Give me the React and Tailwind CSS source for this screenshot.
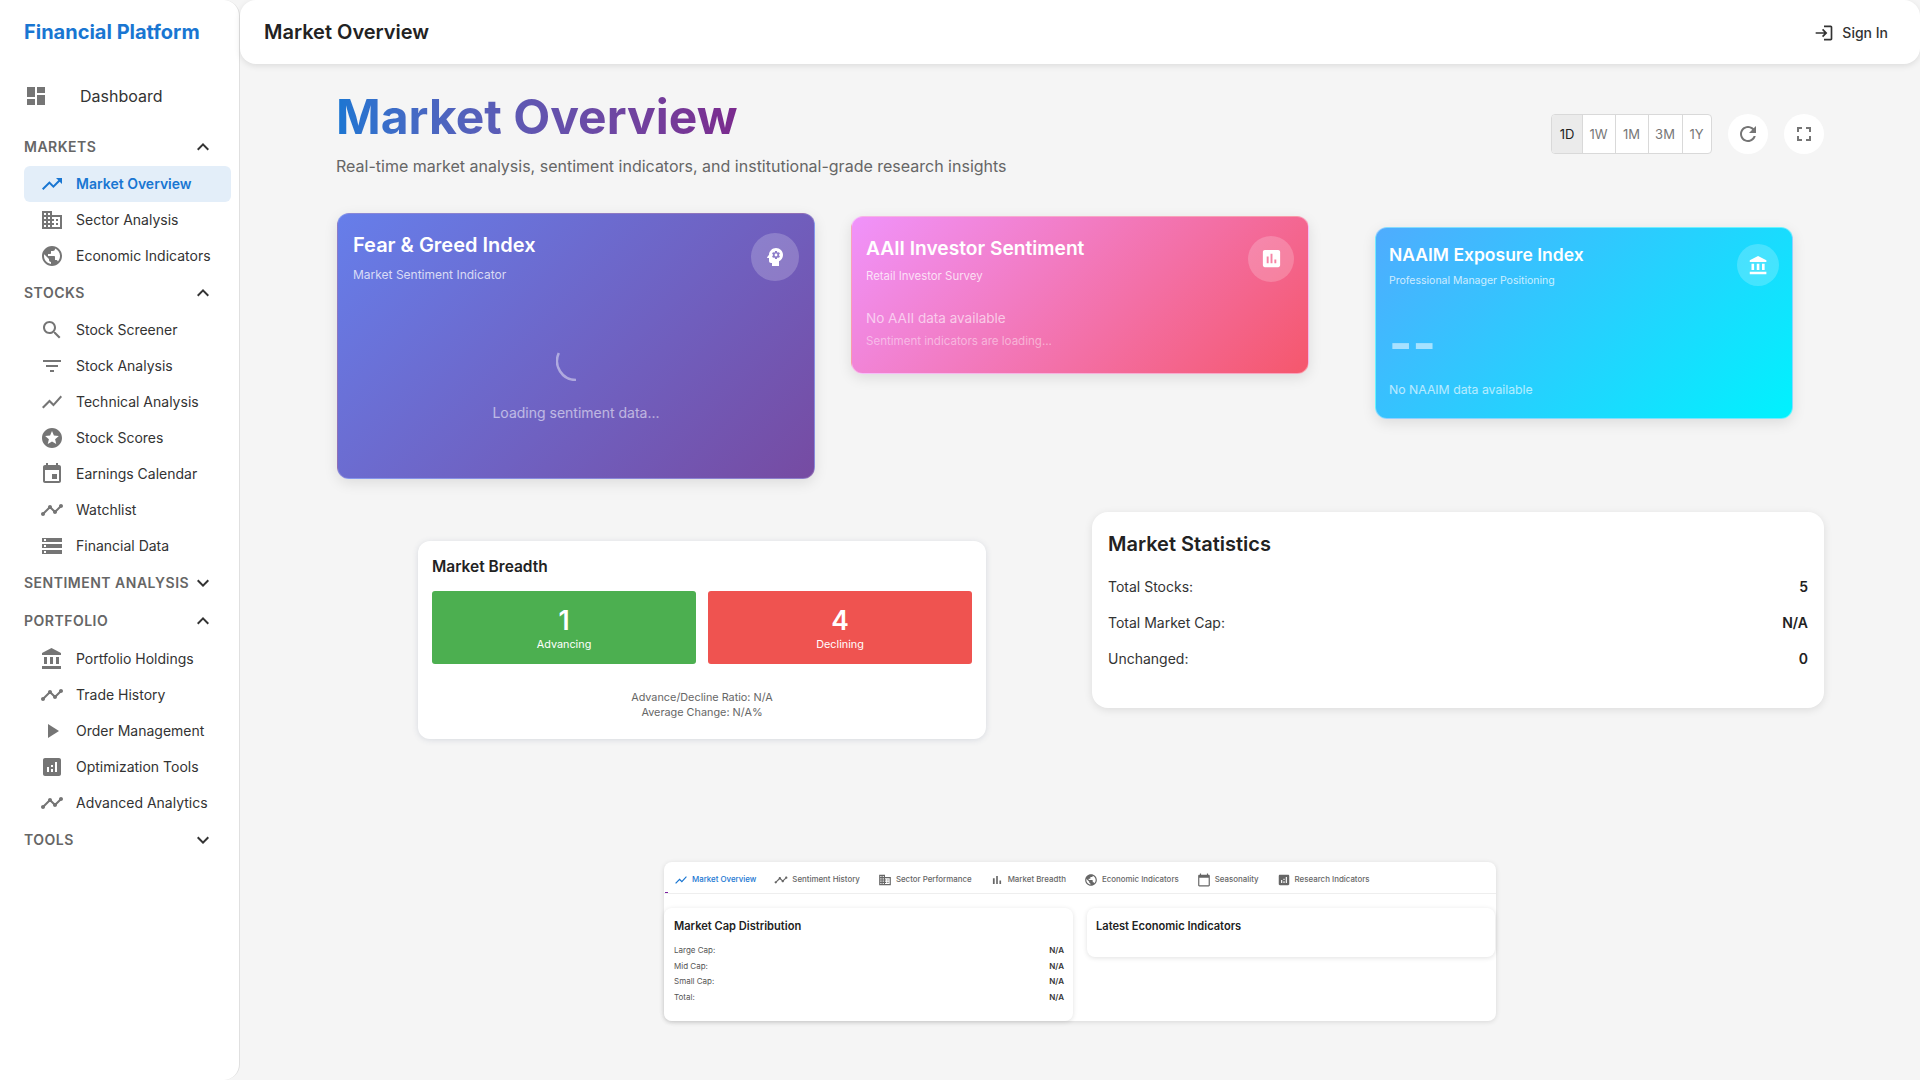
import React from 'react';

const P = {
  dashboard: 'M3 13h8V3H3v10zm0 8h8v-6H3v6zm10 0h8V11h-8v10zm0-18v6h8V3h-8z',
  trendingUp: 'm16 6 2.29 2.29-4.88 4.88-4-4L2 16.59 3.41 18l6-6 4 4 6.3-6.29L22 12V6z',
  business: 'M12 7V3H2v18h20V7H12zM6 19H4v-2h2v2zm0-4H4v-2h2v2zm0-4H4V9h2v2zm0-4H4V5h2v2zm4 12H8v-2h2v2zm0-4H8v-2h2v2zm0-4H8V9h2v2zm0-4H8V5h2v2zm10 12h-8v-2h2v-2h-2v-2h2v-2h-2V9h8v10zm-2-8h-2v2h2v-2zm0 4h-2v2h2v-2z',
  publicGlobe: 'M12 2C6.48 2 2 6.48 2 12s4.48 10 10 10 10-4.48 10-10S17.52 2 12 2zm-1 17.93c-3.95-.49-7-3.85-7-7.93 0-.62.08-1.21.21-1.79L9 15v1c0 1.1.9 2 2 2v1.93zm6.9-2.54c-.26-.81-1-1.39-1.9-1.39h-1v-3c0-.55-.45-1-1-1H8v-2h2c.55 0 1-.45 1-1V7h2c1.1 0 2-.9 2-2v-.41c2.93 1.19 5 4.06 5 7.41 0 2.08-.8 3.97-2.1 5.39z',
  search: 'M15.5 14h-.79l-.28-.27C15.41 12.59 16 11.11 16 9.5 16 5.91 13.09 3 9.5 3S3 5.91 3 9.5 5.91 16 9.5 16c1.61 0 3.09-.59 4.23-1.57l.27.28v.79l5 4.99L20.49 19l-4.99-5zm-6 0C7.01 14 5 11.99 5 9.5S7.01 5 9.5 5 14 7.01 14 9.5 11.99 14 9.5 14z',
  filter: 'M10 18h4v-2h-4v2zM3 6v2h18V6H3zm3 7h12v-2H6v2z',
  showChart: 'M3.5 18.49l6-6.01 4 4L22 6.92l-1.41-1.41-7.09 7.97-4-4L2 16.99z',
  stars: 'M11.99 2C6.47 2 2 6.48 2 12s4.47 10 9.99 10C17.52 22 22 17.52 22 12S17.52 2 11.99 2zm4.24 16L12 15.45 7.77 18l1.12-4.81-3.73-3.23 4.92-.42L12 5l1.92 4.53 4.92.42-3.73 3.23L16.23 18z',
  event: 'M17 12h-5v5h5v-5zM16 1v2H8V1H6v2H5c-1.11 0-1.99.9-1.99 2L3 19c0 1.1.89 2 2 2h14c1.1 0 2-.9 2-2V5c0-1.1-.9-2-2-2h-1V1h-2zm3 18H5V8h14v11z',
  timeline: 'M23 8c0 1.1-.9 2-2 2-.18 0-.35-.02-.51-.07l-3.56 3.55c.05.16.07.34.07.52 0 1.1-.9 2-2 2s-2-.9-2-2c0-.18.02-.36.07-.52l-2.55-2.55c-.16.05-.34.07-.52.07s-.36-.02-.52-.07l-4.55 4.56c.05.16.07.33.07.51 0 1.1-.9 2-2 2s-2-.9-2-2 .9-2 2-2c.18 0 .35.02.51.07l4.56-4.55C8.02 9.36 8 9.18 8 9c0-1.1.9-2 2-2s2 .9 2 2c0 .18-.02.36-.07.52l2.55 2.55c.16-.05.34-.07.52-.07s.36.02.52.07l3.55-3.56C19.02 8.35 19 8.18 19 8c0-1.1.9-2 2-2s2 .9 2 2z',
  storage: 'M2 20h20v-4H2v4zm2-3h2v2H4v-2zM2 4v4h20V4H2zm4 3H4V5h2v2zm-4 7h20v-4H2v4zm2-3h2v2H4v-2z',
  bank: 'M4 10v7h3v-7H4zm6 0v7h3v-7h-3zM2 22h19v-3H2v3zm14-12v7h3v-7h-3zm-4.5-9L2 6v2h19V6l-9.5-5z',
  play: 'M8 5v14l11-7z',
  analytics: 'M19 3H5c-1.1 0-2 .9-2 2v14c0 1.1.9 2 2 2h14c1.1 0 2-.9 2-2V5c0-1.1-.9-2-2-2zM9 17H7v-5h2v5zm4 0h-2v-3h2v3zm0-5h-2v-2h2v2zm4 5h-2V7h2v10z',
  assessment: 'M19 3H5c-1.1 0-2 .9-2 2v14c0 1.1.9 2 2 2h14c1.1 0 2-.9 2-2V5c0-1.1-.9-2-2-2zM9 17H7v-7h2v7zm4 0h-2V7h2v10zm4 0h-2v-4h2v4z',
  less: 'm12 8-6 6 1.41 1.41L12 10.83l4.59 4.58L18 14z',
  more: 'M16.59 8.59 12 13.17 7.41 8.59 6 10l6 6 6-6z',
  login: 'M11 7 9.6 8.4l2.6 2.6H2v2h10.2l-2.6 2.6L11 17l5-5-5-5zm9 12h-8v2h8c1.1 0 2-.9 2-2V5c0-1.1-.9-2-2-2h-8v2h8v14z',
  refresh: 'M17.65 6.35C16.2 4.9 14.21 4 12 4c-4.42 0-7.99 3.58-7.99 8s3.57 8 7.99 8c3.73 0 6.84-2.55 7.73-6h-2.08c-.82 2.33-3.04 4-5.65 4-3.31 0-6-2.69-6-6s2.69-6 6-6c1.66 0 3.14.69 4.22 1.78L13 11h7V4l-2.35 2.35z',
  fullscreen: 'M7 14H5v5h5v-2H7v-3zm-2-4h2V7h3V5H5v5zm12 7h-3v2h5v-5h-2v3zM14 5v2h3v3h2V5h-5z',
  psychology: 'M13 8.57c-.79 0-1.43.64-1.43 1.43s.64 1.43 1.43 1.43 1.43-.64 1.43-1.43-.64-1.43-1.43-1.43zM13 3C9.25 3 6.2 5.94 6.02 9.64L4.1 12.2c-.25.33-.01.8.4.8H6v3c0 1.1.9 2 2 2h1v3h7v-4.68c2.36-1.12 4-3.53 4-6.32 0-3.87-3.13-7-7-7zm3 7c0 .13-.01.26-.02.39l.83.66c.08.06.1.16.05.25l-.8 1.39c-.05.09-.16.12-.24.09l-.99-.4c-.21.16-.43.29-.67.39L14 13.83c-.01.1-.1.17-.2.17h-1.6c-.1 0-.18-.07-.2-.17l-.15-1.06c-.25-.1-.47-.23-.68-.39l-.99.4c-.09.03-.2 0-.25-.09l-.8-1.39c-.05-.08-.03-.19.05-.25l.84-.66c-.01-.13-.02-.26-.02-.39s.02-.27.04-.39l-.85-.66c-.08-.06-.1-.16-.05-.26l.8-1.38c.05-.09.15-.12.24-.09l1 .4c.2-.15.43-.29.67-.39L12 6.17c.02-.1.1-.17.2-.17h1.6c.1 0 .18.07.2.17l.15 1.06c.24.1.46.23.67.39l1-.4c.09-.03.2 0 .24.09l.8 1.38c.05.09.03.2-.05.26l-.85.66c.03.12.04.25.04.39z',
  barChart: 'M5 9.2h3V19H5zM10.6 5h2.8v14h-2.8zm5.6 8H19v6h-2.8z',
  calendar: 'M20 3h-1V1h-2v2H7V1H5v2H4c-1.1 0-2 .9-2 2v16c0 1.1.9 2 2 2h16c1.1 0 2-.9 2-2V5c0-1.1-.9-2-2-2zm0 18H4V8h16v13z',
};

function Icon({ d, className }) {
  return (
    <svg viewBox="0 0 24 24" fill="currentColor" className={className}>
      <path d={d} />
    </svg>
  );
}

const nav = [
  { title: 'MARKETS', open: true, items: [
    ['Market Overview', P.trendingUp, true],
    ['Sector Analysis', P.business],
    ['Economic Indicators', P.publicGlobe],
  ] },
  { title: 'STOCKS', open: true, items: [
    ['Stock Screener', P.search],
    ['Stock Analysis', P.filter],
    ['Technical Analysis', P.showChart],
    ['Stock Scores', P.stars],
    ['Earnings Calendar', P.event],
    ['Watchlist', P.timeline],
    ['Financial Data', P.storage],
  ] },
  { title: 'SENTIMENT ANALYSIS', open: false, items: [] },
  { title: 'PORTFOLIO', open: true, items: [
    ['Portfolio Holdings', P.bank],
    ['Trade History', P.timeline],
    ['Order Management', P.play],
    ['Optimization Tools', P.analytics],
    ['Advanced Analytics', P.timeline],
  ] },
  { title: 'TOOLS', open: false, items: [] },
];

function Sidebar() {
  return (
    <aside className="w-[240px] h-screen shrink-0 bg-white rounded-r-2xl border-r border-[#e0e0e0]">
      <div className="h-16 pl-6 flex items-center text-[20px] font-bold text-[#1976d2]">Financial Platform</div>
      <div className="h-12 mt-2 pl-6 flex items-center">
        <Icon d={P.dashboard} className="w-6 h-6 text-[#757575]" />
        <span className="ml-8 text-base text-[#333]">Dashboard</span>
      </div>
      <div className="mt-[7.8px]">
        {nav.map((group) => (
          <div key={group.title}>
            <div className="h-[38.2px] pl-6 pr-6 flex items-center justify-between">
              <span className="text-sm font-semibold tracking-[0.5px] whitespace-nowrap text-[#666]">{group.title}</span>
              <Icon d={group.open ? P.less : P.more} className="w-6 h-6 text-[#333]" />
            </div>
            {group.items.map(([label, d, active]) => (
              <div
                key={label}
                className={`h-9 ml-6 mr-2 pl-4 flex items-center rounded-md ${active ? 'bg-[#e3eef9] text-[#1976d2] font-semibold' : 'text-[#333]'}`}
              >
                <Icon d={d} className={`w-6 h-6 shrink-0 ${active ? 'text-[#1976d2]' : 'text-[#757575]'}`} />
                <span className="ml-3 text-sm">{label}</span>
              </div>
            ))}
          </div>
        ))}
      </div>
    </aside>
  );
}

function Header() {
  return (
    <header className="h-16 shrink-0 bg-white rounded-2xl shadow-[0_2px_6px_rgba(0,0,0,0.1)] pl-6 pr-8 flex items-center justify-between">
      <h2 className="text-[20px] font-semibold text-[#222]">Market Overview</h2>
      <div className="pt-[2px] flex items-center text-sm font-medium text-[#333]">
        <Icon d={P.login} className="w-5 h-5 mr-2" />
        Sign In
      </div>
    </header>
  );
}

function Controls() {
  const ranges = [['1D', 'w-[30px]'], ['1W', 'w-[33px]'], ['1M', 'w-[33px]'], ['3M', 'w-[34px]'], ['1Y', 'w-[29px]']];
  return (
    <div className="flex items-center mt-[25.5px]">
      <div className="flex h-10 rounded border border-[#d9d9d9] bg-white overflow-hidden">
        {ranges.map(([r, w], i) => (
          <div
            key={r}
            className={`${w} pt-px flex items-center justify-center text-[13px] ${i > 0 ? 'pr-px border-l border-[#d9d9d9] text-[#777]' : 'bg-[#ebebeb] text-[#222]'}`}
          >
            {r}
          </div>
        ))}
      </div>
      <div className="ml-4 w-10 h-10 rounded-full bg-white flex items-center justify-center text-[#757575]">
        <Icon d={P.refresh} className="w-6 h-6" />
      </div>
      <div className="ml-4 w-10 h-10 rounded-full bg-white flex items-center justify-center text-[#757575]">
        <Icon d={P.fullscreen} className="w-6 h-6" />
      </div>
    </div>
  );
}

function FearGreedCard() {
  return (
    <div className="w-[478px] h-[266px] ml-px shrink-0 rounded-xl bg-[linear-gradient(135deg,#667eea,#764ba2)] border border-white/20 shadow-[0_4px_14px_rgba(0,0,0,0.1)] text-white px-[15px] pt-[17px]">
      <div className="flex items-start justify-between">
        <div>
          <div className="text-[20px] leading-7 font-semibold">Fear &amp; Greed Index</div>
          <div className="mt-[8px] text-xs leading-4 text-white/75">Market Sentiment Indicator</div>
        </div>
        <div className="mt-[2px] w-12 h-12 rounded-full bg-white/20 flex items-center justify-center">
          <Icon d={P.psychology} className="w-6 h-6" />
        </div>
      </div>
      <div className="mt-[58px] flex flex-col items-center">
        <svg viewBox="0 0 40 40" className="w-10 h-10" fill="none">
          <path d="M2.8 12A19 19 0 0 0 20 39" stroke="rgba(255,255,255,0.45)" strokeWidth="2.5" />
        </svg>
        <div className="mt-[22px] text-sm leading-5 text-white/55">Loading sentiment data...</div>
      </div>
    </div>
  );
}

function AaiiCard() {
  return (
    <div className="w-[458px] h-[158px] ml-9 mt-[3px] shrink-0 rounded-xl bg-[linear-gradient(135deg,#f093fb,#f5576c)] border border-white/40 shadow-[0_4px_14px_rgba(0,0,0,0.1)] text-white pl-[14px] pr-[14px] pt-[18.5px]">
      <div className="flex items-start justify-between">
        <div>
          <div className="text-[19.2px] leading-6 font-semibold">AAII Investor Sentiment</div>
          <div className="mt-[9.5px] text-[11.4px] leading-[14px] text-white/75">Retail Investor Survey</div>
        </div>
        <div className="w-[46px] h-[46px] rounded-full bg-white/20 flex items-center justify-center">
          <Icon d={P.assessment} className="w-[23px] h-[23px]" />
        </div>
      </div>
      <div className="mt-[25px] text-[13.5px] leading-5 text-white/60">No AAII data available</div>
      <div className="mt-[6px] text-[11.55px] leading-[14px] text-white/45">Sentiment indicators are loading...</div>
    </div>
  );
}

function NaaimCard() {
  return (
    <div className="w-[418px] h-[192px] ml-[66px] mt-[14px] shrink-0 rounded-xl bg-[linear-gradient(135deg,#4facfe,#00f2fe)] border border-white/40 shadow-[0_4px_14px_rgba(0,0,0,0.1)] text-white pl-[13px] pr-[13px] pt-[15px]">
      <div className="flex items-start justify-between">
        <div>
          <div className="text-[17.5px] leading-6 font-semibold">NAAIM Exposure Index</div>
          <div className="mt-[7px] text-[10.5px] leading-[14px] text-white/75">Professional Manager Positioning</div>
        </div>
        <div className="mt-px w-[42px] h-[42px] rounded-full bg-white/20 flex items-center justify-center">
          <Icon d={P.bank} className="w-[21px] h-[21px]" />
        </div>
      </div>
      <div className="mt-[35px] text-[50px] leading-10 font-bold text-white/55">--</div>
      <div className="mt-[19px] text-[12.25px] leading-4 text-white/65">No NAAIM data available</div>
    </div>
  );
}

function BreadthCard() {
  return (
    <div className="w-[568px] h-[198px] ml-[82px] mt-[29px] shrink-0 rounded-xl bg-white shadow-[0_1px_6px_rgba(60,80,120,0.16)] px-[14px] pt-[14px]">
      <div className="text-[15.5px] leading-6 font-semibold text-[#222]">Market Breadth</div>
      <div className="mt-[12px] flex gap-3">
        <div className="flex-1 h-[73px] rounded-[3px] bg-[#4caf50] text-white text-center pt-[13px]">
          <div className="text-[26.4px] leading-8 font-semibold">1</div>
          <div className="mt-[0.5px] text-[10.85px] leading-[14px]">Advancing</div>
        </div>
        <div className="flex-1 h-[73px] rounded-[3px] bg-[#ef5350] text-white text-center pt-[13px]">
          <div className="text-[26.4px] leading-8 font-semibold">4</div>
          <div className="mt-[0.5px] text-[10.85px] leading-[14px]">Declining</div>
        </div>
      </div>
      <div className="mt-[26px] text-center text-[10.85px] leading-[15px] text-[#666]">
        <div>Advance/Decline Ratio: N/A</div>
        <div>Average Change: N/A%</div>
      </div>
    </div>
  );
}

function StatsCard() {
  const rows = [['Total Stocks:', '5'], ['Total Market Cap:', 'N/A'], ['Unchanged:', '0']];
  return (
    <div className="w-[732px] h-[196px] ml-[106px] shrink-0 rounded-2xl bg-white shadow-[0_2px_8px_rgba(0,0,0,0.1)] px-4 pt-4">
      <div className="text-[20px] leading-8 font-semibold text-[#222]">Market Statistics</div>
      <div className="mt-[9px]">
        {rows.map(([k, v]) => (
          <div key={k} className="h-9 flex items-center justify-between text-sm text-[#333]">
            <span>{k}</span>
            <span className="font-semibold text-[#222]">{v}</span>
          </div>
        ))}
      </div>
    </div>
  );
}

const tabs = [
  ['Market Overview', P.showChart, true],
  ['Sentiment History', P.timeline],
  ['Sector Performance', P.business],
  ['Market Breadth', P.barChart],
  ['Economic Indicators', P.publicGlobe],
  ['Seasonality', P.calendar],
  ['Research Indicators', P.analytics],
];

function TabsPanel() {
  const caps = ['Large Cap:', 'Mid Cap:', 'Small Cap:', 'Total:'];
  return (
    <div className="w-[832px] h-[159px] ml-[328px] mt-[123px] rounded-lg bg-white shadow-[0_1px_5px_rgba(0,0,0,0.12)]">
      <div className="relative h-8 pt-[4px] border-b border-[#eee] flex pl-px">
        {tabs.map(([label, d, active]) => (
          <div key={label} className={`px-[9px] flex items-center text-[7.9px] font-medium ${active ? 'text-[#1976d2]' : 'text-[#666]'}`}>
            <Icon d={d} className="w-[14px] h-[14px] mr-[4px]" />
            {label}
          </div>
        ))}
        <span className="absolute left-px bottom-0 w-[3px] h-px bg-[#7b1fa2]" />
      </div>
      <div className="mt-[14px] flex items-start">
        <div className="w-[409px] h-[113px] rounded-lg bg-white shadow-[0_1px_5px_rgba(0,0,0,0.12)] pl-[10px] pr-[9px] pt-[10px]">
          <div className="text-[11.1px] leading-4 font-semibold text-[#222]">Market Cap Distribution</div>
          <div className="mt-2">
            {caps.map((c) => (
              <div key={c} className="h-[15.7px] flex items-center justify-between text-[8px] text-[#555]">
                <span>{c}</span>
                <span className="font-semibold text-[#333]">N/A</span>
              </div>
            ))}
          </div>
        </div>
        <div className="ml-[14px] w-[408px] h-[49px] rounded-lg bg-white shadow-[0_1px_5px_rgba(0,0,0,0.12)] px-[9px] pt-[10px]">
          <div className="text-[11.1px] leading-4 font-semibold text-[#222]">Latest Economic Indicators</div>
        </div>
      </div>
    </div>
  );
}

export default function App() {
  return (
    <div className="flex h-screen overflow-hidden bg-[#f5f5f5] font-[Inter,sans-serif]">
      <Sidebar />
      <div className="flex-1 flex flex-col min-w-0">
        <Header />
        <main className="pl-[96px] pr-[96px] pt-[24.5px]">
          <div className="flex items-start justify-between">
            <div>
              <h1 className="text-[48px] leading-[56px] font-bold bg-gradient-to-r from-[#1976d2] to-[#7b2a8e] bg-clip-text text-transparent w-fit">
                Market Overview
              </h1>
              <p className="mt-[9px] text-base leading-6 text-[#666]">
                Real-time market analysis, sentiment indicators, and institutional-grade research insights
              </p>
            </div>
            <Controls />
          </div>
          <div className="mt-[35.5px] flex items-start">
            <FearGreedCard />
            <AaiiCard />
            <NaaimCard />
          </div>
          <div className="mt-[33px] flex items-start">
            <BreadthCard />
            <StatsCard />
          </div>
          <TabsPanel />
        </main>
      </div>
    </div>
  );
}
